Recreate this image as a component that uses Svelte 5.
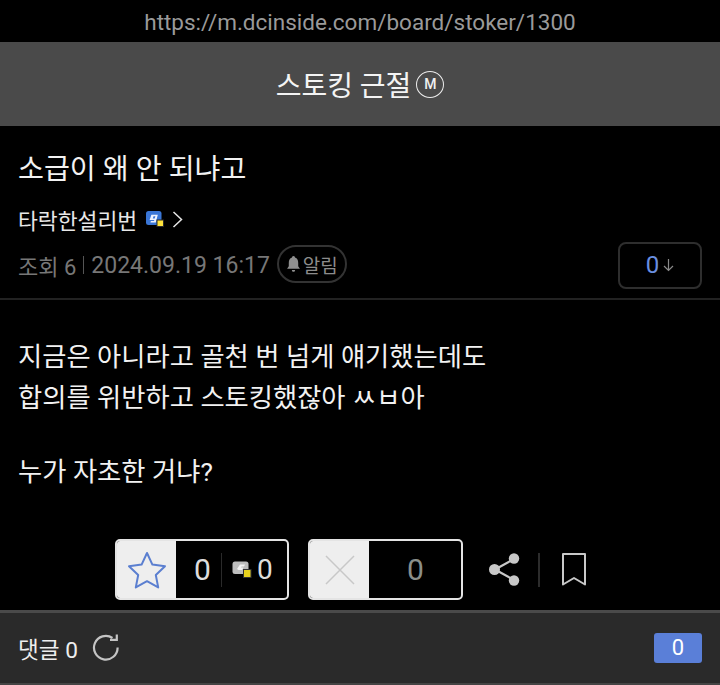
<script>
	const lines = ['지금은 아니라고 골천 번 넘게 얘기했는데도', '합의를 위반하고 스토킹했잖아 ㅆㅂ아', '', '누가 자초한 거냐?'];
</script>

<div class="page">
	<div class="url">https://m.dcinside.com/board/stoker/1300</div>
	<header class="gall">
		<span class="gall-name">스토킹 근절</span>
		<span class="minor">M</span>
	</header>

	<section class="head">
		<h1>소급이 왜 안 되냐고</h1>
		<div class="writer">
			<span>타락한설리번</span>
			<svg class="nik" width="18" height="16" viewBox="0 0 18 16">
				<rect x="0" y="0" width="15.5" height="14" rx="2.5" fill="#3a76d6" />
				<path d="M3.6 9 L5.4 3.8 H11.8 L9.8 11.6 H4.4 L4.9 10 H8 L8.3 9 Z M6.8 7.4 H8.7 L9.4 5.3 H7.5 Z" fill="#eef3ff" fill-rule="evenodd" />
				<rect x="11" y="9" width="6.5" height="6.5" fill="#ffe33c" stroke="#2a2a2a" stroke-width="1" />
			</svg>
			<svg class="chev" width="11" height="17" viewBox="0 0 11 17">
				<path d="M1.5 1 L9.5 8.5 L1.5 16" fill="none" stroke="#e6e6e6" stroke-width="1.5" />
			</svg>
		</div>
		<div class="meta">
			<span>조회 6</span>
			<i class="sep"></i>
			<span class="date">2024.09.19 16:17</span>
			<span class="alarm">
				<svg width="15" height="18" viewBox="0 0 14 16">
					<path d="M7 0.5 C8 0.5 8.4 1.2 8.4 2 C10.6 2.7 11.4 4.6 11.4 7 V10 L13 12.5 H1 L2.6 10 V7 C2.6 4.6 3.4 2.7 5.6 2 C5.6 1.2 6 0.5 7 0.5 Z M5.5 13.5 H8.5 C8.5 14.6 7.8 15.3 7 15.3 C6.2 15.3 5.5 14.6 5.5 13.5 Z" fill="#8f8f8f" />
				</svg>
				알림
			</span>
			<span class="sort">
				<b>0</b>
				<svg width="11" height="14" viewBox="0 0 11 14">
					<path d="M5.5 1 V12.5 M1 8 L5.5 12.5 L10 8" fill="none" stroke="#8a8a8a" stroke-width="1.2" />
				</svg>
			</span>
		</div>
	</section>

	<article class="body">
		{#each lines as line}
			{#if line}
				<p>{line}</p>
			{:else}
				<p class="blank"></p>
			{/if}
		{/each}
	</article>

	<div class="actions">
		<div class="vote up">
			<span class="vote-icon">
				<svg width="40" height="38" viewBox="0 0 40 38">
					<path d="M20 2 L25.4 13.6 L38 15.2 L28.8 24 L31.2 36.4 L20 30.2 L8.8 36.4 L11.2 24 L2 15.2 L14.6 13.6 Z" fill="none" stroke="#5b7fd0" stroke-width="2" stroke-linejoin="round" />
				</svg>
			</span>
			<span class="count">0</span>
			<i class="vsep"></i>
			<svg class="fix" width="20" height="17" viewBox="0 0 20 17">
				<rect x="0.5" y="0.5" width="16" height="12.5" rx="2.5" fill="#bdbdbd" />
				<path d="M5 8 L8 3.5 H13 L12 5.5 H9.5 L9 6.5 H11.5 L10 9 H6.5 Z" fill="#f2f2f2" />
				<rect x="11.5" y="8.5" width="7.5" height="8" fill="#e6d21e" stroke="#333" stroke-width="1" />
			</svg>
			<span class="count fixcount">0</span>
		</div>
		<div class="vote down">
			<span class="vote-icon">
				<svg width="30" height="30" viewBox="0 0 30 30">
					<path d="M1 1 L29 29 M29 1 L1 29" stroke="#c8c8c8" stroke-width="1.5" fill="none" />
				</svg>
			</span>
			<span class="count dim">0</span>
		</div>
		<svg class="share" width="32" height="33" viewBox="0 0 32 33">
			<path d="M7 16.5 L26 6 M7 16.5 L26 27" stroke="#c8c8c8" stroke-width="2.2" />
			<circle cx="6.5" cy="16.5" r="5.5" fill="#c8c8c8" />
			<circle cx="26" cy="5.5" r="5.2" fill="#c8c8c8" />
			<circle cx="26" cy="27.5" r="5.2" fill="#c8c8c8" />
		</svg>
		<i class="bar"></i>
		<svg class="mark" width="24" height="33" viewBox="0 0 24 33">
			<path d="M1 1 H23 V31.5 L12 25 L1 31.5 Z" fill="none" stroke="#c8c8c8" stroke-width="2" stroke-linejoin="round" />
		</svg>
	</div>

	<footer class="cmt">
		<span class="cmt-label">댓글 0</span>
		<svg width="28" height="28" viewBox="0 0 28 28">
			<path d="M20.5 4 A11.8 11.8 0 1 0 25.6 13.5" fill="none" stroke="#c4c4c4" stroke-width="2.2" />
			<path d="M18 5.8 H24.8 V0.5" fill="none" stroke="#c4c4c4" stroke-width="2.2" />
		</svg>
		<span class="cmt-badge">0</span>
	</footer>
</div>

<style>
	:global(body) {
		margin: 0;
		background: #000;
	}

	.page {
		width: 720px;
		height: 685px;
		overflow: hidden;
		background: #000;
		font-family: Roboto, 'Noto Sans CJK KR', sans-serif;
		color: #fff;
	}

	.url {
		height: 42px;
		line-height: 44px;
		text-align: center;
		font-size: 22.5px;
		color: #9a9a9a;
	}

	.gall {
		height: 84px;
		background: #4a4a4a;
		display: flex;
		align-items: center;
		justify-content: center;
		gap: 5px;
	}

	.gall-name {
		font-size: 28px;
		color: #f4f4f4;
	}

	.minor {
		width: 28px;
		height: 27px;
		box-sizing: border-box;
		border: 1.5px solid #ececec;
		border-radius: 50%;
		display: flex;
		align-items: center;
		justify-content: center;
		font-size: 14px;
		font-weight: 500;
		color: #f0f0f0;
	}

	.head {
		height: 174px;
		box-sizing: border-box;
		padding: 25px 18px 0;
		border-bottom: 2px solid #222;
	}

	h1 {
		margin: 0;
		font-size: 28.2px;
		font-weight: 400;
		line-height: 38px;
		color: #f2f2f2;
	}

	.writer {
		margin-top: 17px;
		height: 26px;
		display: flex;
		align-items: center;
		font-size: 21.6px;
		color: #e8e8e8;
	}

	.nik {
		margin-left: 9px;
	}

	.chev {
		margin-left: 8px;
	}

	.meta {
		margin-top: 10px;
		height: 46px;
		display: flex;
		align-items: center;
		font-size: 22px;
		color: #777;
	}

	.sep {
		width: 1px;
		height: 18px;
		margin: 0 7px;
		background: #555;
	}

	.date {
		font-size: 23px;
	}

	.alarm {
		margin-left: 7px;
		margin-top: -2px;
		width: 70px;
		height: 38px;
		box-sizing: border-box;
		border: 2px solid #333;
		border-radius: 19px;
		display: flex;
		align-items: center;
		justify-content: center;
		gap: 2px;
		font-size: 19px;
		color: #8c8c8c;
	}

	.sort {
		margin-left: auto;
		width: 84px;
		height: 47px;
		box-sizing: border-box;
		border: 2px solid #2e2e2e;
		border-radius: 8px;
		display: flex;
		align-items: center;
		justify-content: center;
		gap: 4px;
	}

	.sort b {
		font-weight: 400;
		font-size: 24px;
		color: #6a8fe0;
	}

	.body {
		padding: 37px 18px 0;
		height: 197px;
		box-sizing: border-box;
		font-size: 26.3px;
		line-height: 41px;
		color: #f2f2f2;
	}

	.body p {
		margin: 0;
	}

	.body .blank {
		height: 33px;
	}

	.actions {
		height: 113px;
		box-sizing: border-box;
		padding-left: 115px;
		padding-top: 42px;
		display: flex;
		align-items: flex-start;
	}

	.vote {
		height: 61px;
		box-sizing: border-box;
		border: 2px solid #e4e4e4;
		border-radius: 5px;
		display: flex;
		align-items: center;
		overflow: hidden;
	}

	.up {
		width: 174px;
	}

	.down {
		width: 155px;
		margin-left: 19px;
	}

	.vote-icon {
		width: 59px;
		height: 100%;
		background: #eee;
		display: flex;
		align-items: center;
		justify-content: center;
	}

	.count {
		font-size: 30px;
		color: #ddd;
		margin-left: 18px;
	}

	.dim {
		margin-left: 38px;
		color: #8a8f8a;
	}

	.vsep {
		width: 1px;
		height: 34px;
		margin: 0 10px;
		background: #2a2a2a;
	}

	.fix {
		flex: none;
	}

	.fixcount {
		margin-left: 5px;
		font-size: 28px;
	}

	.share {
		margin: 14px 0 0 25px;
	}

	.bar {
		width: 2px;
		height: 34px;
		margin: 14px 0 0 18px;
		background: #2c2c2c;
	}

	.mark {
		margin: 14px 0 0 22px;
	}

	.cmt {
		height: 75px;
		box-sizing: border-box;
		border-top: 3px solid #4a4a4a;
		border-bottom: 2px solid #444;
		background: #2a2a2a;
		display: flex;
		align-items: center;
		padding: 0 18px;
		gap: 14px;
	}

	.cmt-label {
		font-size: 22.6px;
		color: #eee;
	}

	.cmt-badge {
		margin-left: auto;
		width: 48px;
		height: 30px;
		border-radius: 3px;
		background: #5a7fd8;
		text-align: center;
		font-size: 22px;
		line-height: 30px;
	}
</style>
